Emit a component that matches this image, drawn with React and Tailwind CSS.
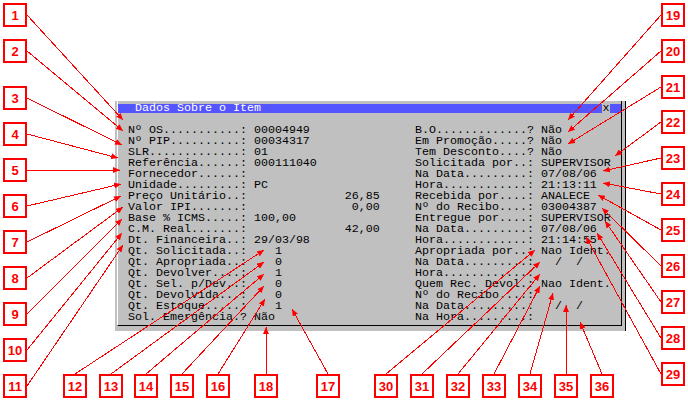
import React from 'react'

// left / right field columns of the "Dados Sobre o Item" dialog
const leftRows = [
  ['Nº OS', ':', '00004949'],
  ['Nº PIP', ':', '00034317'],
  ['SLR', ':', '01'],
  ['Referência', ':', '000111040'],
  ['Fornecedor', ':', ''],
  ['Unidade', ':', 'PC'],
  ['Preço Unitário', ':', '26,85'.padStart(18)],
  ['Valor IPI', ':', '0,00'.padStart(18)],
  ['Base % ICMS', ':', '100,00'],
  ['C.M. Real', ':', '42,00'.padStart(18)],
  ['Dt. Financeira', ':', '29/03/98'],
  ['Qt. Solicitada', ':', '   1'],
  ['Qt. Apropriada', ':', '   0'],
  ['Qt. Devolver', ':', '   1'],
  ['Qt. Sel. p/Dev.', ':', '   0'],
  ['Qt. Devolvida', ':', '   0'],
  ['Qt. Estoque', ':', '   1'],
  ['Sol. Emergência', '?', 'Não'],
]

const rightRows = [
  ['B.O', '?', 'Não'],
  ['Em Promoção', '?', 'Não'],
  ['Tem Desconto', '?', 'Não'],
  ['Solicitada por', ':', 'SUPERVISOR'],
  ['Na Data', ':', '07/08/06'],
  ['Hora', ':', '21:13:11'],
  ['Recebida por', ':', 'ANALECE'],
  ['Nº do Recibo', ':', '03004387'],
  ['Entregue por', ':', 'SUPERVISOR'],
  ['Na Data', ':', '07/08/06'],
  ['Hora', ':', '21:14:55'],
  ['Apropriada por', ':', 'Nao Ident.'],
  ['Na Data', ':', '  /  /'],
  ['Hora', ':', ''],
  ['Quem Rec. Devol.', ':', 'Nao Ident.'],
  ['Nº do Recibo', ':', ''],
  ['Na Data', ':', '  /  /'],
  ['Na Hora', ':', ''],
]

// callout: number, box left/top, line start, arrow tip
const callouts = [
  [1, 3, 3, 27, 15, 123, 120],
  [2, 3, 39, 27, 51, 123, 131],
  [3, 3, 86, 27, 98, 122, 145],
  [4, 3, 122, 27, 134, 118, 158],
  [5, 3, 158, 27, 170, 120, 170],
  [6, 3, 194, 27, 206, 121, 184],
  [7, 3, 230, 27, 242, 121, 196],
  [8, 3, 266, 27, 278, 123, 207],
  [9, 3, 302, 27, 314, 122, 219],
  [10, 3, 338, 27, 350, 122, 233],
  [11, 3, 374, 27, 386, 123, 245],
  [12, 63, 374, 75, 374, 264, 250],
  [13, 99, 374, 111, 374, 264, 262],
  [14, 134, 374, 146, 374, 264, 274],
  [15, 170, 374, 182, 374, 264, 286],
  [16, 206, 374, 218, 374, 265, 299],
  [18, 254, 374, 266, 374, 266, 327],
  [17, 316, 374, 328, 374, 292, 309],
  [30, 374, 374, 386, 374, 535, 250],
  [31, 410, 374, 422, 374, 540, 262],
  [32, 446, 374, 458, 374, 540, 274],
  [33, 482, 374, 494, 374, 540, 286],
  [34, 518, 374, 530, 374, 553, 293],
  [35, 554, 374, 566, 374, 566, 305],
  [36, 590, 374, 602, 374, 580, 322],
  [19, 661, 3, 661, 15, 568, 120],
  [20, 661, 39, 661, 51, 568, 132],
  [21, 661, 75, 661, 87, 568, 144],
  [22, 661, 110, 661, 122, 615, 156],
  [23, 661, 146, 661, 158, 603, 171],
  [24, 661, 182, 661, 194, 603, 183],
  [25, 661, 218, 661, 230, 598, 195],
  [26, 661, 254, 661, 266, 602, 208],
  [27, 661, 290, 661, 302, 605, 221],
  [28, 661, 326, 661, 338, 597, 233],
  [29, 661, 362, 661, 374, 586, 237],
]

const line = ([label, sep, value]) => label.padEnd(16, '.') + sep + ' ' + value

function FieldColumn({ rows, className = '' }) {
  return (
    <div className={className}>
      {rows.map((r, i) => (
        <div key={i} className="h-[11px] whitespace-pre">{line(r)}</div>
      ))}
    </div>
  )
}

export default function App() {
  return (
    <div className="relative w-[688px] h-[400px] overflow-hidden bg-white">

      {/* dialog */}
      <div className="ml-[115px] pt-[101px]">
        <div className="w-[511px] bg-[#c0c0c0] pl-[2px] pr-[3px] pb-[5px] border-r border-black">
          <div className="w-[505px] border-l border-r border-b border-l-white border-r-black border-b-black pt-[3px] pb-[2px] font-['Liberation_Mono',monospace] text-[11.67px] leading-[11px] text-black">

            {/* title bar */}
            <div className="flex h-[9px] bg-[#5555ff] pl-[17px] pr-[11px] leading-[9px]">
              <span className="flex-1 text-white whitespace-pre">Dados Sobre o Item</span>
              <span className="w-[8px] bg-[#c0c0c0] text-center text-black">x</span>
            </div>

            {/* fields */}
            <div className="flex mt-[12px] pl-[10px]">
              <FieldColumn rows={leftRows} className="w-[287px]" />
              <FieldColumn rows={rightRows} />
            </div>
          </div>
        </div>
      </div>

      {/* arrows */}
      <svg className="absolute inset-0 pointer-events-none" width="688" height="400" viewBox="0 0 688 400">
        <defs>
          <marker id="ah" markerWidth="7" markerHeight="6" refX="7" refY="3" orient="auto" markerUnits="userSpaceOnUse">
            <path d="M0,0 L7,3 L0,6 z" fill="#ff0000" />
          </marker>
        </defs>
        {callouts.map(([n, , , x1, y1, x2, y2]) => (
          <line key={n} x1={x1} y1={y1} x2={x2} y2={y2} stroke="#ff0000" strokeWidth="1" shapeRendering="crispEdges" markerEnd="url(#ah)" />
        ))}
      </svg>

      {/* numbered boxes */}
      {callouts.map(([n, x, y]) => (
        <div
          key={n}
          className="absolute w-[24px] h-[24px] border-2 border-[#ff0000] bg-white flex items-center justify-center font-['Liberation_Sans',Arial,sans-serif] font-bold text-[13px] leading-none text-[#ff0000]"
          style={{ left: x, top: y }}
        >
          {n}
        </div>
      ))}
    </div>
  )
}
